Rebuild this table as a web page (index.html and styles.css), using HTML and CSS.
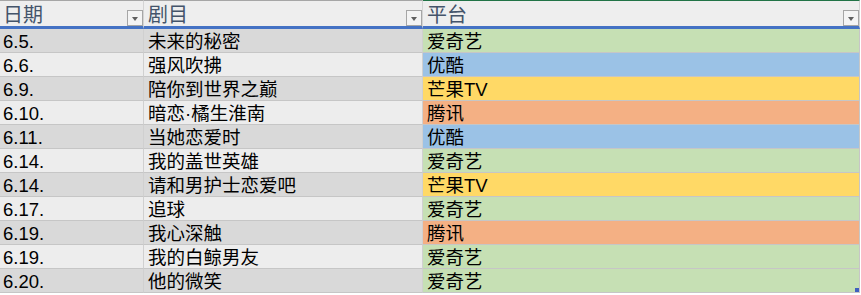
FILE: index.html
```html
<!DOCTYPE html>
<html lang="zh">
<head>
<meta charset="utf-8">
<link rel="stylesheet" href="styles.css">
</head>
<body>
<div class="sheet">
  <div class="hcell">日期<span class="filter"></span></div>
  <div class="hcell">剧目<span class="filter"></span></div>
  <div class="hcell hlast">平台<span class="filter"></span></div>

  <div class="cell dark">6.5.</div><div class="cell dark">未来的秘密</div><div class="cell plat green">爱奇艺</div>
  <div class="cell light">6.6.</div><div class="cell light">强风吹拂</div><div class="cell plat blue">优酷</div>
  <div class="cell dark">6.9.</div><div class="cell dark">陪你到世界之巅</div><div class="cell plat yellow">芒果TV</div>
  <div class="cell light">6.10.</div><div class="cell light">暗恋·橘生淮南</div><div class="cell plat orange">腾讯</div>
  <div class="cell dark">6.11.</div><div class="cell dark">当她恋爱时</div><div class="cell plat blue">优酷</div>
  <div class="cell light">6.14.</div><div class="cell light">我的盖世英雄</div><div class="cell plat green">爱奇艺</div>
  <div class="cell dark">6.14.</div><div class="cell dark">请和男护士恋爱吧</div><div class="cell plat yellow">芒果TV</div>
  <div class="cell light">6.17.</div><div class="cell light">追球</div><div class="cell plat green">爱奇艺</div>
  <div class="cell dark">6.19.</div><div class="cell dark">我心深触</div><div class="cell plat orange">腾讯</div>
  <div class="cell light">6.19.</div><div class="cell light">我的白鲸男友</div><div class="cell plat green">爱奇艺</div>
  <div class="cell dark">6.20.</div><div class="cell dark">他的微笑</div><div class="cell plat green last">爱奇艺<span class="handle"></span></div>
</div>
</body>
</html>
```

FILE: styles.css
```css
html, body {
  margin: 0;
  padding: 0;
  background: #ffffff;
}

.sheet {
  display: grid;
  grid-template-columns: 144px 279px 437px;
  width: 860px;
  font-family: "Liberation Sans", "Noto Sans CJK SC", sans-serif;
}

.hcell {
  position: relative;
  box-sizing: border-box;
  height: 29px;
  border-top: 1px solid #a6a6a6;
  border-right: 1px solid #d4d4d4;
  border-bottom: 3px solid #4472c4;
  background: #eeeeee;
  color: #44546a;
  font-size: 20px;
  line-height: 22px;
  padding-left: 3px;
  padding-top: 3px;
}

.hcell:nth-child(2) {
  padding-left: 4px;
}

.hlast {
  border-top-color: #217346;
  padding-left: 4px;
}

.filter {
  position: absolute;
  right: 0;
  bottom: 0;
  width: 16px;
  height: 16px;
  box-sizing: border-box;
  border: 1px solid #a6a6a6;
  background: #f4f4f4;
}

.filter::after {
  content: "";
  position: absolute;
  left: 4px;
  top: 6px;
  border-left: 3.5px solid transparent;
  border-right: 3.5px solid transparent;
  border-top: 4px solid #606060;
}

.cell {
  position: relative;
  box-sizing: border-box;
  height: 24px;
  border-right: 1px solid #d0d0d0;
  border-bottom: 1px solid #c6c6c6;
  font-size: 18.5px;
  line-height: 22px;
  padding-top: 2px;
  color: #000000;
  padding-left: 4px;
  white-space: nowrap;
}

.cell:nth-child(3n+1) {
  padding-left: 3px;
}

.dark { background: #d9d9d9; }
.light { background: #ededed; }
.green { background: #c6e0b4; }
.blue { background: #9bc2e6; }
.yellow { background: #ffd966; }
.orange { background: #f4b084; }

.plat {
  border-right-color: #c6c6c6;
}

.handle {
  position: absolute;
  right: 0;
  bottom: 0;
  width: 4px;
  height: 4px;
  background: #3f5fbf;
}
```
